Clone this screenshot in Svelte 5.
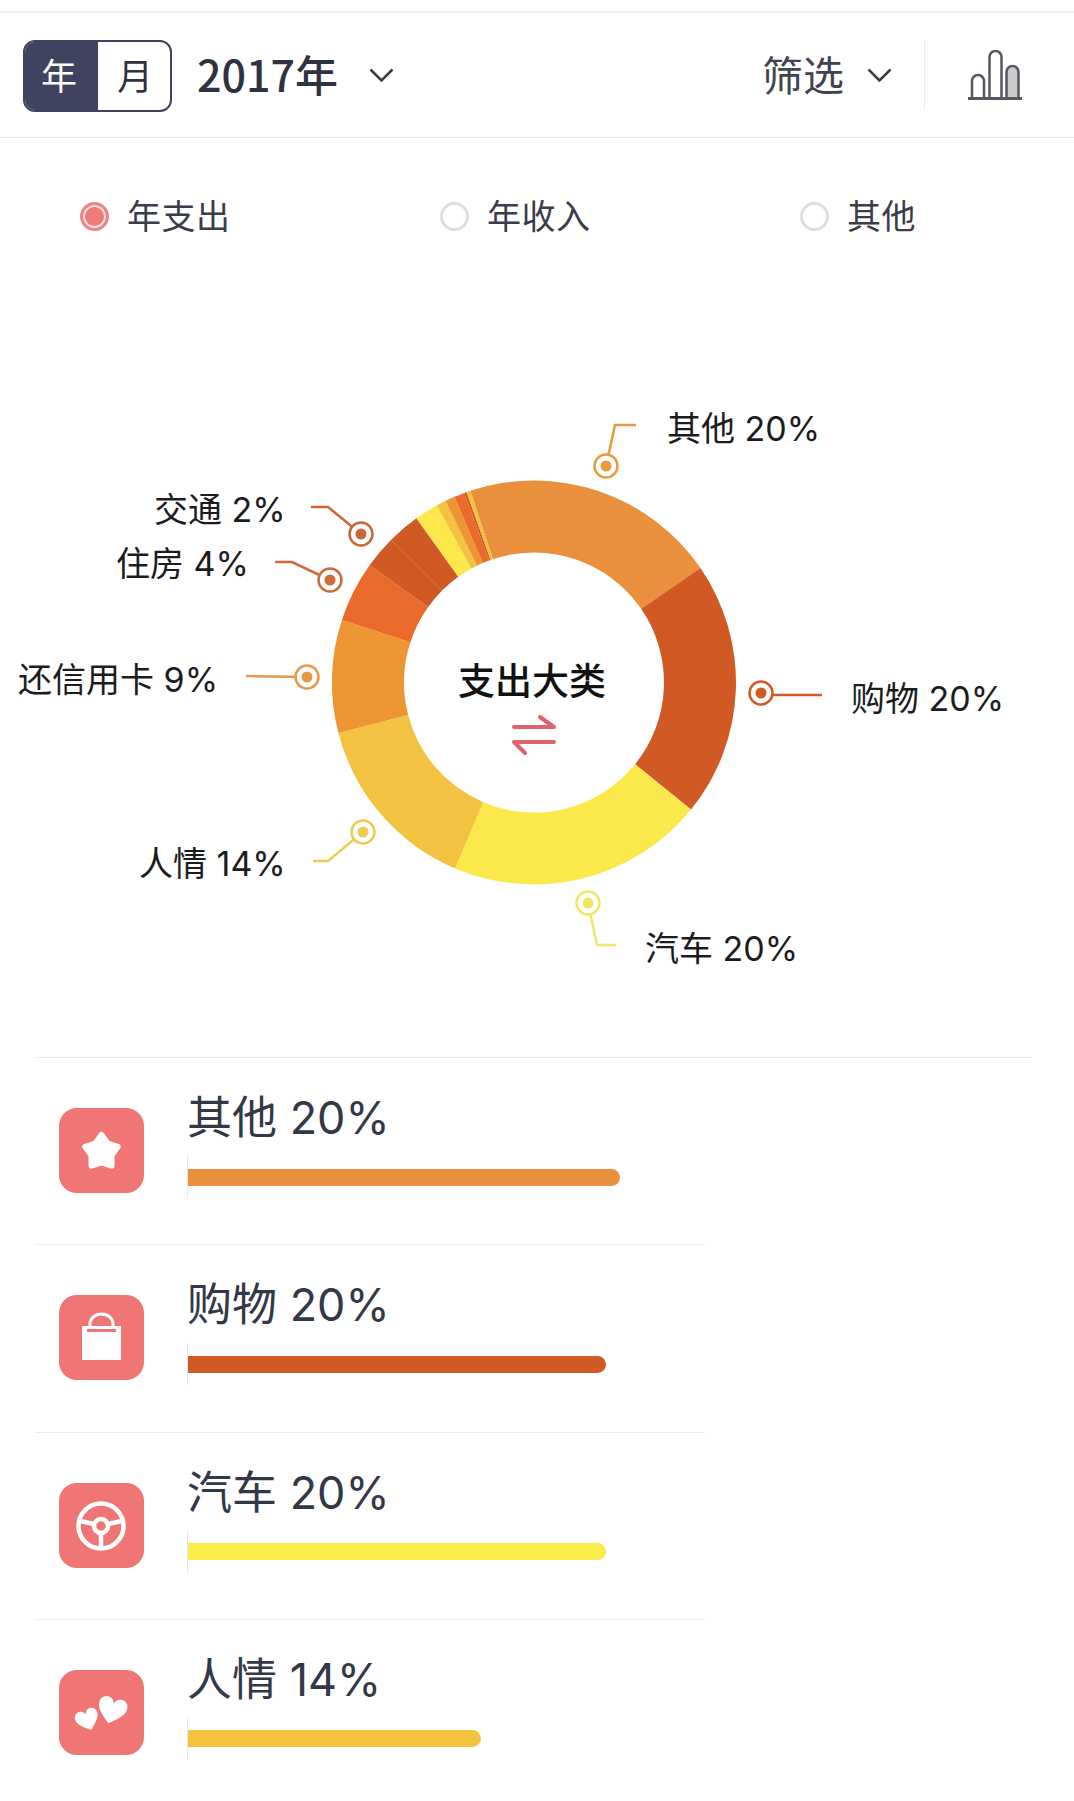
<script>
  const cx = 534;
  const cy = 682.5;
  const outer = 202;
  const inner = 130;

  // angles in degrees, clockwise from 12 o'clock
  const segments = [
    { from: 341.6, to: 415.5, color: '#ea8f3c' },
    { from: 55.5, to: 129, color: '#d15a24' },
    { from: 129, to: 203, color: '#fbe94b' },
    { from: 203, to: 255.5, color: '#f3c240' },
    { from: 255.5, to: 288, color: '#ec9532' },
    { from: 288, to: 305.5, color: '#e96a2a' },
    { from: 305.5, to: 315, color: '#d15a24' },
    { from: 315, to: 324.4, color: '#d15a24' },
    { from: 324.4, to: 331.2, color: '#fbe94b' },
    { from: 331.2, to: 334, color: '#f3c240' },
    { from: 334, to: 336.8, color: '#ec9532' },
    { from: 336.8, to: 339.8, color: '#e96a2a' },
    { from: 339.8, to: 340.5, color: '#d15a24' },
    { from: 340.5, to: 341.6, color: '#f3c240' }
  ];

  function pt(r, deg) {
    const a = (deg * Math.PI) / 180;
    return `${(cx + r * Math.sin(a)).toFixed(2)} ${(cy - r * Math.cos(a)).toFixed(2)}`;
  }

  function arc(from, to) {
    const large = to - from > 180 ? 1 : 0;
    return `M${pt(outer, from)} A${outer} ${outer} 0 ${large} 1 ${pt(outer, to)} L${pt(inner, to)} A${inner} ${inner} 0 ${large} 0 ${pt(inner, from)} Z`;
  }

  const callouts = [
    { text: '其他 20%', x: 667, y: 441, dot: [606, 466], line: '606,466 615,425 636,425', color: '#e89a3c' },
    { text: '交通 2%', x: 154, y: 522, dot: [361, 534], line: '361,534 328,507 311,507', color: '#c9653a' },
    { text: '住房 4%', x: 116, y: 576, dot: [330, 580], line: '330,580 292,562 275,562', color: '#cf6a3a' },
    { text: '还信用卡 9%', x: 18, y: 692, dot: [307, 677], line: '307,677 246,676', color: '#e8964a' },
    { text: '人情 14%', x: 139, y: 876, dot: [363, 832], line: '363,832 328,861 313,861', color: '#eecb55' },
    { text: '购物 20%', x: 851, y: 711, dot: [761, 693], line: '761,693 772,695 822,695', color: '#d15a24' },
    { text: '汽车 20%', x: 645, y: 961, dot: [588, 903], line: '588,903 597,945 616,945', color: '#f0e764' }
  ];

  const radios = [
    { label: '年支出', on: true },
    { label: '年收入', on: false },
    { label: '其他', on: false }
  ];

  const rows = [
    { label: '其他 20%', bar: 432, color: '#ea8f3c', icon: 'star', wide: true },
    { label: '购物 20%', bar: 418, color: '#d15a24', icon: 'bag' },
    { label: '汽车 20%', bar: 418, color: '#f9ec4b', icon: 'wheel' },
    { label: '人情 14%', bar: 293, color: '#f5c23e', icon: 'hearts' }
  ];

  const heart = 'M12 21C5 15.5 1 11.5 1 7.5A5.5 5.5 0 0 1 12 5.5A5.5 5.5 0 0 1 23 7.5C23 11.5 19 15.5 12 21Z';
</script>

<div class="page">
  <header class="toolbar">
    <div class="switch">
      <span class="tab active">年</span>
      <span class="tab">月</span>
    </div>
    <span class="year">2017年</span>
    <svg class="chev year-chev" viewBox="0 0 25 14"><path d="M1.5 1.5 12.5 12.5 23.5 1.5" /></svg>
    <span class="filter">筛选</span>
    <svg class="chev filter-chev" viewBox="0 0 25 14"><path d="M1.5 1.5 12.5 12.5 23.5 1.5" /></svg>
    <span class="divider"></span>
    <svg class="bars" viewBox="0 0 54 50">
      <path d="M4 48V31a6 6 0 0 1 12 0V48" />
      <path d="M21.500 48V7a6 6 0 0 1 12 0V48" />
      <path class="filled" d="M38.500 48V22a6 6 0 0 1 12 0V48" />
      <path class="base" d="M0 48.500H54" />
    </svg>
  </header>

  <div class="radios">
    {#each radios as r}
      <div class="radio">
        <span class="mark" class:on={r.on}></span>
        <span class="radio-text">{r.label}</span>
      </div>
    {/each}
  </div>

  <svg class="chart" viewBox="0 380 1074 677">
    {#each segments as s}
      <path d={arc(s.from, s.to)} fill={s.color} />
    {/each}

    {#each callouts as c}
      <polyline points={c.line} fill="none" stroke={c.color} stroke-width="2.5" />
      <circle cx={c.dot[0]} cy={c.dot[1]} r="11.500" fill="#fff" stroke={c.color} stroke-width="2.500" />
      <circle cx={c.dot[0]} cy={c.dot[1]} r="5.500" fill={c.color} />
      <text class="callout" x={c.x} y={c.y}>{c.text}</text>
    {/each}

    <text class="center" x="532" y="695">支出大类</text>
    <path class="swap" d="M514 727H554L540 717M554 742H514L525 753" />
  </svg>

  <div class="list">
    {#each rows as row}
      <div class="row" class:wide={row.wide}>
        <div class="icon">
          <svg viewBox="0 0 85 85">
            {#if row.icon === 'star'}
              <polygon class="solid" points="42.500,27 48.670,35.500 58.700,38.750 52.500,47.240 52.500,57.750 42.500,54.500 32.500,57.750 32.500,47.240 26.300,38.750 36.330,35.500" />
            {:else if row.icon === 'bag'}
              <path class="line" d="M31 31V29a11.500 10 0 0 1 23 0V31" />
              <rect class="fill" x="23" y="31" width="39" height="34" />
              <rect class="cut" x="28" y="34" width="29" height="3" />
            {:else if row.icon === 'wheel'}
              <circle class="line thick" cx="42" cy="43" r="22.500" />
              <circle class="line thick" cx="42" cy="43" r="7" />
              <path class="line thick" d="M21 38 35 41M63 38 49 41M42 50V65" />
            {:else}
              <path class="fill" d={heart} transform="translate(52.500 42) rotate(15) scale(1.300) translate(-12 -12)" />
              <path class="fill" d={heart} transform="translate(29 51) rotate(-20) scale(1.050) translate(-12 -12)" />
            {/if}
          </svg>
        </div>
        <div class="info">
          <div class="label">{row.label}</div>
          <div class="track">
            <div class="bar" style="width: {row.bar}px; background: {row.color}"></div>
          </div>
        </div>
      </div>
    {/each}
  </div>
</div>

<style>
  :global(body) {
    background: #fff;
  }

  .page {
    width: 1074px;
    height: 1801px;
    overflow: hidden;
    padding-top: 11px;
    box-sizing: border-box;
    background: #fff;
    font-family: 'Noto Sans CJK SC', 'Noto Sans', sans-serif;
  }

  .toolbar {
    display: flex;
    align-items: center;
    height: 127px;
    box-sizing: border-box;
    padding-left: 23px;
    border-top: 2px solid #eeeeee;
    border-bottom: 1px solid #e9e9e9;
  }

  .switch {
    display: flex;
    width: 149px;
    height: 72px;
    margin-top: 2px;
    box-sizing: border-box;
    border: 2px solid #3f4360;
    border-radius: 12px;
    overflow: hidden;
    flex: none;
  }

  .tab {
    width: 74px;
    flex: none;
    text-align: center;
    font-size: 36px;
    line-height: 64px;
    color: #2f3240;
  }

  .tab.active {
    padding-right: 5px;
    width: 68px;
    background: #3f4360;
    color: #fff;
  }

  .year {
    margin-left: 25px;
    margin-top: -5px;
    font-size: 43px;
    font-weight: 500;
    color: #2f3240;
    line-height: 60px;
  }

  .chev {
    width: 25px;
    height: 14px;
    flex: none;
    fill: none;
    stroke: #3a3d48;
    stroke-width: 2.500;
  }

  .year-chev {
    margin-left: 31px;
  }

  .filter {
    margin-left: 368px;
    margin-top: -5px;
    font-size: 41px;
    line-height: 60px;
    color: #41444f;
  }

  .filter-chev {
    margin-left: 23px;
  }

  .divider {
    width: 1px;
    height: 70px;
    margin-left: 32px;
    background: #eeeeee;
    flex: none;
  }

  .bars {
    width: 54px;
    height: 50px;
    margin-left: 43px;
    flex: none;
    fill: none;
    stroke: #555861;
    stroke-width: 2.500;
  }

  .bars .filled {
    fill: #cccccc;
  }

  .bars .base {
    stroke-width: 3;
  }

  .radios {
    display: grid;
    grid-template-columns: 360px 360px 1fr;
    height: 242px;
    box-sizing: border-box;
    padding: 54px 0 0 80px;
  }

  .radio {
    display: flex;
    align-items: center;
    gap: 18px;
    height: 48px;
    font-size: 34px;
    color: #3a3d48;
  }

  .radio-text {
    margin-top: -4px;
    letter-spacing: 0.5px;
  }

  .mark {
    width: 29px;
    height: 29px;
    box-sizing: border-box;
    border: 3px solid #dddddd;
    border-radius: 50%;
    flex: none;
  }

  .mark.on {
    border-color: #ef8585;
    background: #ef7a7a;
    box-shadow: inset 0 0 0 2px #fde3e3;
  }

  .chart {
    display: block;
    width: 1074px;
    height: 677px;
  }

  .callout {
    font-family: Inter, 'Noto Sans CJK SC', sans-serif;
    font-size: 34px;
    fill: #1c1c1e;
  }

  .center {
    font-size: 37px;
    font-weight: 500;
    fill: #111;
    text-anchor: middle;
  }

  .swap {
    fill: none;
    stroke: #e0626a;
    stroke-width: 4;
    stroke-linecap: round;
    stroke-linejoin: round;
  }

  .list {
    padding-left: 36px;
  }

  .row {
    display: flex;
    width: 669px;
    height: 187.300px;
    box-sizing: border-box;
    border-top: 1px solid #ececec;
    padding-left: 23px;
  }

  .row.wide {
    width: 996px;
  }

  .icon {
    width: 85px;
    height: 85px;
    margin-top: 50px;
    border-radius: 18px;
    background: #f07575;
    flex: none;
  }

  .icon svg {
    display: block;
    width: 85px;
    height: 85px;
  }

  .solid {
    fill: #fff;
    stroke: #fff;
    stroke-width: 6;
    stroke-linejoin: round;
  }

  .fill {
    fill: #fff;
  }

  .cut {
    fill: #f07575;
  }

  .line {
    fill: none;
    stroke: #fff;
    stroke-width: 3;
  }

  .line.thick {
    stroke-width: 4.500;
  }

  .info {
    margin-left: 43px;
    width: 440px;
  }

  .label {
    margin-top: 26px;
    height: 72px;
    font-family: Inter, 'Noto Sans CJK SC', sans-serif;
    font-size: 45px;
    line-height: 68px;
    color: #333846;
    white-space: nowrap;
  }

  .track {
    display: flex;
    align-items: center;
    height: 42px;
    border-left: 1px solid #e6e6e6;
  }

  .bar {
    height: 17px;
    border-radius: 0 9px 9px 0;
  }
</style>
